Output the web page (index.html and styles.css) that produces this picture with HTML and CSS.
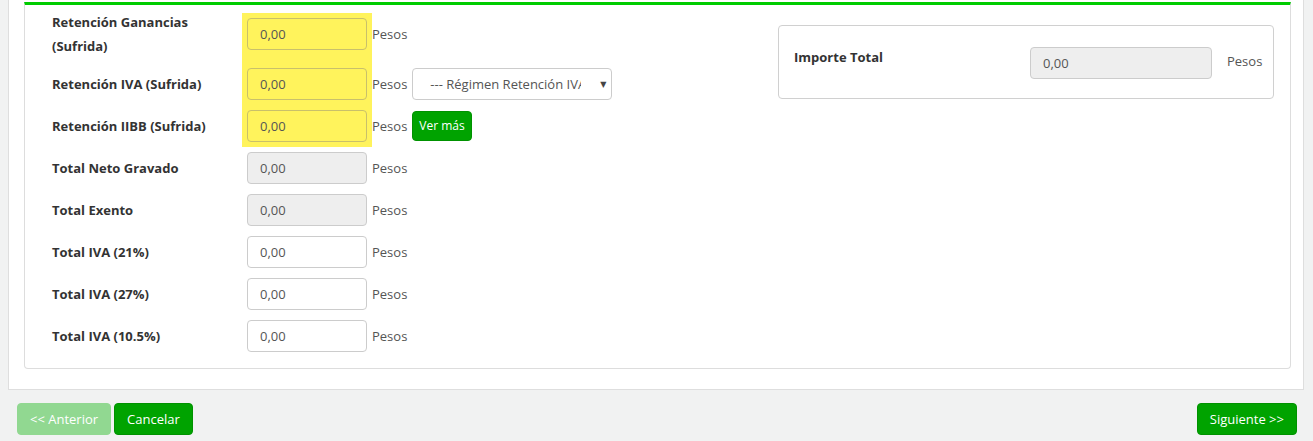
FILE: index.html
```html
<!DOCTYPE html>
<html lang="es">
  <head>
    <meta charset="UTF-8" />
    <meta name="viewport" content="width=device-width, initial-scale=1.0" />
    <title>Comprobante - Totales</title>
    <link rel="stylesheet" href="styles.css">
  </head>
  <body>
    <div class="panel">
      <div class="box">
        <div class="cols">
          <div class="form">
            <div class="highlight-group">
              <div class="row">
                <label class="row-label">Retención Ganancias (Sufrida)</label>
                <input class="field field-yellow" type="text" value="0,00">
                <span class="unit">Pesos</span>
              </div>
              <div class="row">
                <label class="row-label">Retención IVA (Sufrida)</label>
                <input class="field field-yellow" type="text" value="0,00">
                <span class="unit">Pesos</span>
                <div class="select-wrap">
                  <select class="select">
                    <option>--- Régimen Retención IVA ---</option>
                  </select>
                  <span class="caret">&#9660;</span>
                </div>
              </div>
              <div class="row">
                <label class="row-label">Retención IIBB (Sufrida)</label>
                <input class="field field-yellow" type="text" value="0,00">
                <span class="unit">Pesos</span>
                <button class="btn btn-sm">Ver más</button>
              </div>
            </div>
            <div class="row">
              <label class="row-label">Total Neto Gravado</label>
              <input class="field" type="text" value="0,00" disabled>
              <span class="unit">Pesos</span>
            </div>
            <div class="row">
              <label class="row-label">Total Exento</label>
              <input class="field" type="text" value="0,00" disabled>
              <span class="unit">Pesos</span>
            </div>
            <div class="row">
              <label class="row-label">Total IVA (21%)</label>
              <input class="field" type="text" value="0,00">
              <span class="unit">Pesos</span>
            </div>
            <div class="row">
              <label class="row-label">Total IVA (27%)</label>
              <input class="field" type="text" value="0,00">
              <span class="unit">Pesos</span>
            </div>
            <div class="row">
              <label class="row-label">Total IVA (10.5%)</label>
              <input class="field" type="text" value="0,00">
              <span class="unit">Pesos</span>
            </div>
          </div>

          <div class="side">
            <div class="total-box">
              <label class="total-label">Importe Total</label>
              <input class="field total-field" type="text" value="0,00" disabled>
              <span class="total-unit">Pesos</span>
            </div>
          </div>
        </div>
      </div>
    </div>

    <div class="footer">
      <div class="footer-left">
        <button class="btn btn-disabled">&lt;&lt; Anterior</button>
        <button class="btn">Cancelar</button>
      </div>
      <button class="btn">Siguiente &gt;&gt;</button>
    </div>
  </body>
</html>
```

FILE: styles.css
```css
* {
  margin: 0;
  padding: 0;
  box-sizing: border-box;
}

body {
  font-family: 'Open Sans', 'DejaVu Sans', sans-serif;
  font-size: 13px;
  color: #333;
  background: #f1f2f2;
  padding: 0 9px 0 8px;
  height: 441px;
  overflow: hidden;
}

.panel {
  background: white;
  border: 1px solid #dedede;
  border-top: none;
  padding: 2px 12px 20px 15px;
}

.box {
  border: 1px solid #dddddd;
  border-top: 3px solid #00cc00;
  border-radius: 0 0 4px 4px;
  padding: 0 16px 16px 27px;
}

.cols {
  display: flex;
}

.form {
  flex: 1;
  display: flex;
  flex-direction: column;
  gap: 10px;
  padding-top: 5px;
}

.highlight-group {
  position: relative;
  display: flex;
  flex-direction: column;
  gap: 10px;
}

.highlight-group::before {
  content: "";
  position: absolute;
  left: 190px;
  top: 3px;
  bottom: -5px;
  width: 130px;
  background: #fff35c;
}

.row {
  position: relative;
  display: flex;
  align-items: center;
}

.row-label {
  width: 195px;
  padding-right: 40px;
  font-weight: bold;
  line-height: 24px;
}

.field {
  position: relative;
  flex-shrink: 0;
  width: 120px;
  height: 32px;
  padding: 0 12px;
  border: 1px solid #cccccc;
  border-radius: 4px;
  background: white;
  font-family: inherit;
  font-size: 13px;
  color: #555;
  outline: none;
}

.field:disabled {
  background: #eeeeee;
  color: #555;
}

.field-yellow {
  background: #fff35c;
  border-color: #c9c06a;
}

.unit {
  margin-left: 5px;
  color: #555;
}

.select-wrap {
  position: relative;
  margin-left: 5px;
}

.select {
  appearance: none;
  -webkit-appearance: none;
  width: 200px;
  height: 32px;
  padding: 0 30px 0 17px;
  border: 1px solid #cccccc;
  border-radius: 4px;
  background: white;
  font-family: inherit;
  font-size: 13px;
  color: #555;
}

.caret {
  position: absolute;
  right: 6px;
  top: 10px;
  font-size: 8px;
  color: #444;
  pointer-events: none;
}

.btn {
  font-family: inherit;
  font-size: 13px;
  line-height: 18px;
  padding: 6px 12px;
  color: white;
  background: #00a300;
  border: 1px solid #009200;
  border-radius: 4px;
  cursor: pointer;
}

.btn-sm {
  margin-left: 5px;
  font-size: 12px;
  padding: 5px 6px;
}

.btn-disabled {
  background: #91d891;
  border-color: #91d891;
  cursor: not-allowed;
}

.side {
  flex-shrink: 0;
  width: 496px;
  padding-top: 20px;
}

.total-box {
  display: flex;
  align-items: flex-start;
  border: 1px solid #d0d0d0;
  border-radius: 4px;
  padding: 21px 8px 19px 15px;
}

.total-label {
  flex-shrink: 0;
  width: 236px;
  font-weight: bold;
  line-height: 20px;
}

.total-field {
  width: 182px;
}

.total-unit {
  margin-left: 15px;
  margin-top: 4px;
  line-height: 20px;
  color: #555;
}

.footer {
  display: flex;
  justify-content: space-between;
  padding: 13px 7px 0 9px;
}

.footer-left {
  display: flex;
  gap: 3px;
}
```
